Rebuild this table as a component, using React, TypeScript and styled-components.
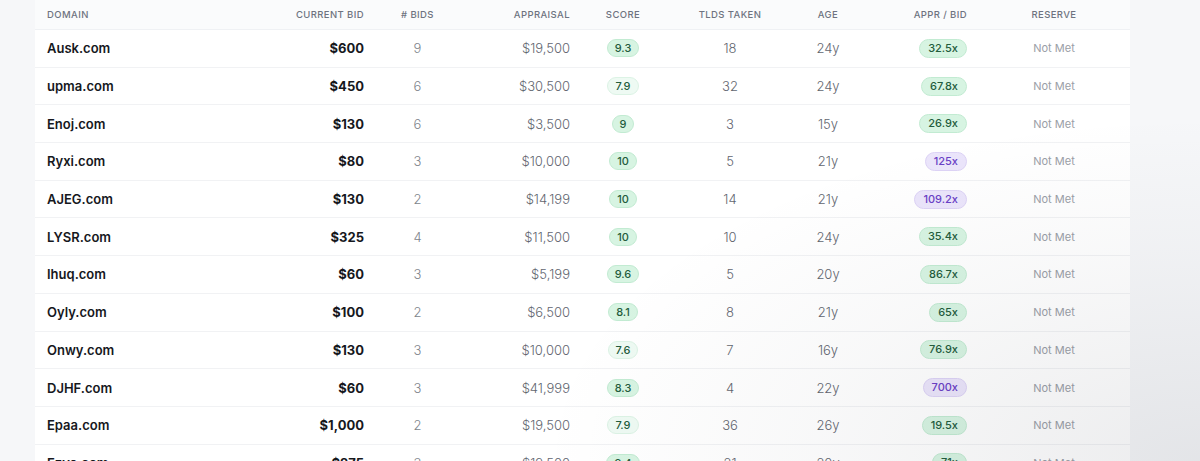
import React from "react";
import styled, { createGlobalStyle } from "styled-components";

const Global = createGlobalStyle`
  html, body { margin: 0; padding: 0; }
  body {
    background: #f6f7f9;
    font-family: "Inter", "Noto Sans", "Liberation Sans", sans-serif;
    -webkit-font-smoothing: antialiased;
  }
`;

const Page = styled.div`
  height: 461px;
  overflow: hidden;
  padding-left: 35px;
  position: relative;
`;

const Shade = styled.div`
  position: absolute;
  inset: 0;
  pointer-events: none;
  background: radial-gradient(ellipse 55% 75% at 100% 100%, rgba(40, 45, 60, 0.09), rgba(40, 45, 60, 0.03) 60%, rgba(40, 45, 60, 0) 100%);
`;

const Card = styled.div`
  width: 1095px;
  background: #ffffff;
`;

const cols = "195px 145px 85px 121px 84px 130px 66px 117px 152px";

const HeadRow = styled.div`
  display: grid;
  grid-template-columns: ${cols};
  height: 30px;
  padding-bottom: 1px;
  align-items: center;
  background: #fafbfc;
  border-bottom: 1px solid #eff1f4;
  box-sizing: border-box;
`;

type Align = "left" | "right" | "center";

const HeadCell = styled.div<{ $align: Align }>`
  font-size: 9.5px;
  letter-spacing: 0.4px;
  text-transform: uppercase;
  color: #6e7380;
  font-weight: 500;
  text-align: ${(p) => p.$align};
  padding: ${(p) => (p.$align === "left" ? "0 0 0 12px" : p.$align === "right" ? "0 11px 0 0" : "0")};
`;

const Row = styled.div`
  display: grid;
  grid-template-columns: ${cols};
  height: 37.7px;
  align-items: center;
  border-bottom: 1px solid #f1f2f4;
  box-sizing: border-box;
`;

const Cell = styled.div<{ $align: Align; $tone?: "dark" | "mid" | "light" | "faint"; $weight?: number; $size?: number }>`
  text-align: ${(p) => p.$align};
  padding: ${(p) => (p.$align === "left" ? "0 0 0 12px" : p.$align === "right" ? "0 11px 0 0" : "0")};
  font-size: ${(p) => p.$size ?? 13}px;
  font-weight: ${(p) => p.$weight ?? 300};
  color: ${(p) =>
    p.$tone === "dark" ? "#16181d" : p.$tone === "mid" ? "#62666f" : p.$tone === "light" ? "#80848c" : p.$tone === "faint" ? "#9a9ea6" : "#16181d"};
`;

type BadgeKind = "green" | "pale" | "purple";

const Badge = styled.span<{ $kind: BadgeKind }>`
  display: inline-block;
  height: 18px;
  line-height: 16px;
  padding: 0 7px;
  border-radius: 10px;
  font-size: 11px;
  font-weight: 500;
  box-sizing: border-box;
  background: ${(p) => (p.$kind === "green" ? "#d7f4e2" : p.$kind === "pale" ? "#eefaf3" : "#ebe5fb")};
  border: 1px solid ${(p) => (p.$kind === "green" ? "#c2ebd2" : p.$kind === "pale" ? "#dcf3e5" : "#ddd3f6")};
  color: ${(p) => (p.$kind === "purple" ? "#6a3fc6" : "#235c3c")};
`;

const ApprBadge = styled(Badge)`
  height: 19px;
  line-height: 17px;
  padding: 0 8px;
`;

type Item = {
  domain: string;
  bid: string;
  bids: number;
  appraisal: string;
  score: string;
  tlds: number;
  age: string;
  ratio: string;
};

const data: Item[] = [
  { domain: "Ausk.com", bid: "$600", bids: 9, appraisal: "$19,500", score: "9.3", tlds: 18, age: "24y", ratio: "32.5x" },
  { domain: "upma.com", bid: "$450", bids: 6, appraisal: "$30,500", score: "7.9", tlds: 32, age: "24y", ratio: "67.8x" },
  { domain: "Enoj.com", bid: "$130", bids: 6, appraisal: "$3,500", score: "9", tlds: 3, age: "15y", ratio: "26.9x" },
  { domain: "Ryxi.com", bid: "$80", bids: 3, appraisal: "$10,000", score: "10", tlds: 5, age: "21y", ratio: "125x" },
  { domain: "AJEG.com", bid: "$130", bids: 2, appraisal: "$14,199", score: "10", tlds: 14, age: "21y", ratio: "109.2x" },
  { domain: "LYSR.com", bid: "$325", bids: 4, appraisal: "$11,500", score: "10", tlds: 10, age: "24y", ratio: "35.4x" },
  { domain: "Ihuq.com", bid: "$60", bids: 3, appraisal: "$5,199", score: "9.6", tlds: 5, age: "20y", ratio: "86.7x" },
  { domain: "Oyly.com", bid: "$100", bids: 2, appraisal: "$6,500", score: "8.1", tlds: 8, age: "21y", ratio: "65x" },
  { domain: "Onwy.com", bid: "$130", bids: 3, appraisal: "$10,000", score: "7.6", tlds: 7, age: "16y", ratio: "76.9x" },
  { domain: "DJHF.com", bid: "$60", bids: 3, appraisal: "$41,999", score: "8.3", tlds: 4, age: "22y", ratio: "700x" },
  { domain: "Epaa.com", bid: "$1,000", bids: 2, appraisal: "$19,500", score: "7.9", tlds: 36, age: "26y", ratio: "19.5x" },
  { domain: "Ezva.com", bid: "$275", bids: 3, appraisal: "$19,500", score: "9.4", tlds: 21, age: "20y", ratio: "71x" },
];

const heads: [string, Align][] = [
  ["Domain", "left"],
  ["Current Bid", "right"],
  ["# Bids", "center"],
  ["Appraisal", "right"],
  ["Score", "center"],
  ["TLDs Taken", "center"],
  ["Age", "center"],
  ["Appr / Bid", "right"],
  ["Reserve", "center"],
];

export default function App() {
  return (
    <>
      <Global />
      <Page>
        <Card>
          <HeadRow>
            {heads.map(([h, a]) => (
              <HeadCell key={h} $align={a}>
                {h}
              </HeadCell>
            ))}
          </HeadRow>
          {data.map((d) => {
            const s = parseFloat(d.score);
            const r = parseFloat(d.ratio);
            return (
              <Row key={d.domain}>
                <Cell $align="left" $tone="dark" $weight={600}>
                  {d.domain}
                </Cell>
                <Cell $align="right" $tone="dark" $weight={700}>
                  {d.bid}
                </Cell>
                <Cell $align="center" $tone="light">
                  {d.bids}
                </Cell>
                <Cell $align="right" $tone="mid">
                  {d.appraisal}
                </Cell>
                <Cell $align="center">
                  <Badge $kind={s >= 8 ? "green" : "pale"}>{d.score}</Badge>
                </Cell>
                <Cell $align="center" $tone="mid">
                  {d.tlds}
                </Cell>
                <Cell $align="center" $tone="mid">
                  {d.age}
                </Cell>
                <Cell $align="right">
                  <ApprBadge $kind={r >= 100 ? "purple" : "green"}>{d.ratio}</ApprBadge>
                </Cell>
                <Cell $align="center" $tone="faint" $size={11} $weight={400}>
                  Not Met
                </Cell>
              </Row>
            );
          })}
        </Card>
        <Shade />
      </Page>
    </>
  );
}
